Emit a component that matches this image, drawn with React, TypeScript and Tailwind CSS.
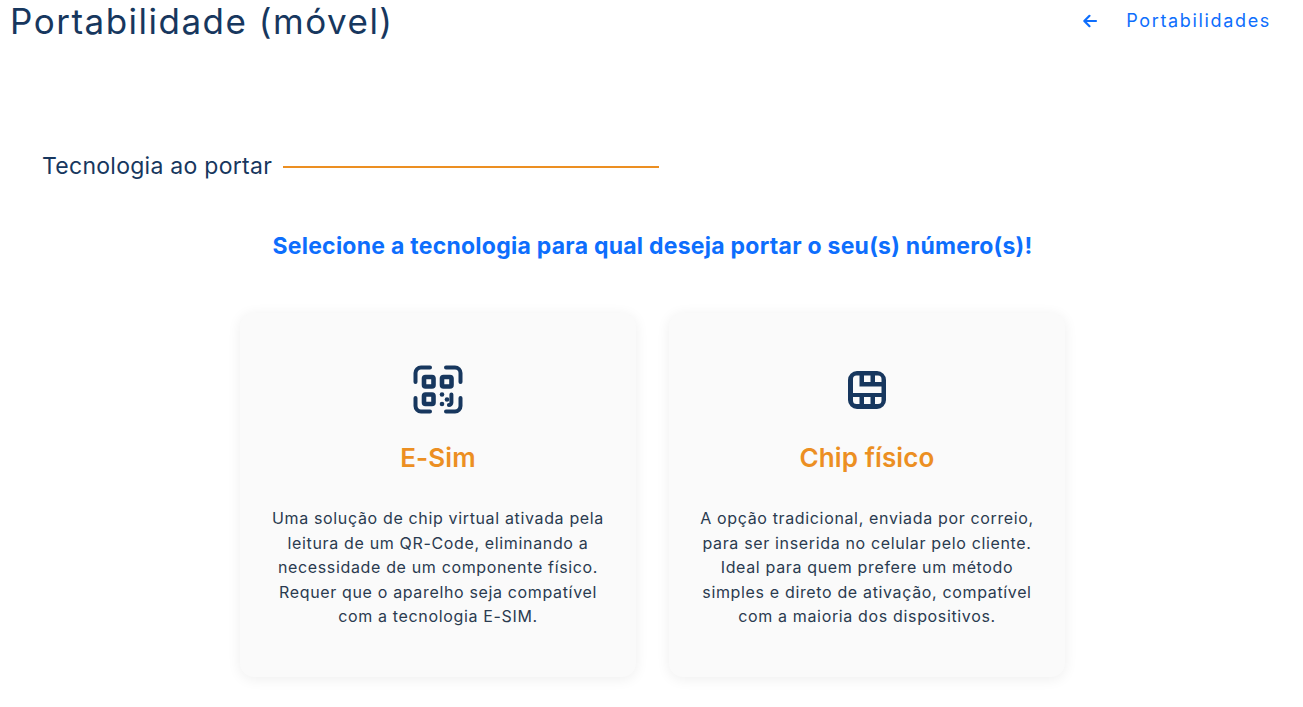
function QrIcon() {
  return (
    <svg width="50" height="50" viewBox="0 0 50 50" fill="none" stroke="#17375e" strokeLinecap="round" strokeLinejoin="round">
      <g strokeWidth="4">
        <path d="M2.500 17V8a5.500 5.500 0 0 1 5.500-5.500h9" />
        <path d="M33 2.500h9a5.500 5.500 0 0 1 5.500 5.500v9" />
        <path d="M2.500 33v8a5.500 5.500 0 0 0 5.500 5.500h9" />
        <path d="M47.500 33v8a5.500 5.500 0 0 1-5.500 5.500h-9" />
      </g>
      <g strokeWidth="4.600">
        <rect x="11" y="12" width="9.500" height="9.500" rx="1.500" />
        <rect x="29" y="12" width="9.500" height="9.500" rx="1.500" />
        <rect x="11" y="29.500" width="9.500" height="9.500" rx="1.500" />
      </g>
      <path d="M38.400 29.500v8a2.500 2.500 0 0 1-2.500 2.500" strokeWidth="4" />
      <g fill="#17375e" stroke="none">
        <circle cx="29" cy="29.500" r="2.300" />
        <circle cx="29" cy="39" r="2.300" />
        <circle cx="34" cy="34.500" r="2.300" />
      </g>
    </svg>
  );
}

function ChipIcon() {
  return (
    <svg width="38" height="38" viewBox="0 0 38 38">
      <path
        fillRule="evenodd"
        fill="#17375e"
        d="M9 0h20a9 9 0 0 1 9 9v20a9 9 0 0 1-9 9H9a9 9 0 0 1-9-9V9a9 9 0 0 1 9-9z
           M16 4.500v6.500h6.500V4.500z
           M27 4.500v6.500h6.500V8a3.500 3.500 0 0 0-3.500-3.500z
           M8.500 4.500A3.500 3.500 0 0 0 5 8v14h28.500v-6.500H11.500V4.500z
           M5 26v3.500A3.500 3.500 0 0 0 8.500 33h3v-7z
           M16 26v7h6.500v-7z
           M27 26v7h3a3.500 3.500 0 0 0 3.500-3.500V26z"
      />
    </svg>
  );
}

function TechCard({ icon, title, lines }: { icon: React.ReactNode; title: string; lines: string[] }) {
  return (
    <div className="flex h-[364px] w-[396px] flex-col items-center rounded-[14px] bg-[#fafafa] shadow-[0_2px_14px_rgba(0,0,0,0.07)]">
      <div className="flex h-[102px] w-full items-end justify-center">{icon}</div>
      <h3 className="mt-[26.500px] text-[26px] leading-[32px] font-semibold tracking-[0.1px] text-[#ec8f22]">{title}</h3>
      <p className="mt-[32.500px] text-center text-[16px] leading-[24.600px] tracking-[0.65px] whitespace-nowrap text-[#2a3b50]">
        {lines.map((l) => (
          <span key={l} className="block">
            {l}
          </span>
        ))}
      </p>
    </div>
  );
}

export default function App() {
  return (
    <div className="h-[707px] w-[1303px] overflow-hidden bg-white font-['Inter','Liberation_Sans',sans-serif]">
      <div className="flex h-[42px] items-center justify-between pr-[32px] pl-[10px]">
        <h1 className="text-[35px] leading-[42px] tracking-[1.500px] text-[#17375e]">Portabilidade (móvel)</h1>
        <a className="flex items-center text-[#0d6efd]">
          <svg width="16" height="16" viewBox="0 0 16 16" fill="none" stroke="currentColor" strokeWidth="2.200" strokeLinecap="round" strokeLinejoin="round">
            <path d="M14 8H2.500M7.500 2.800 2.300 8l5.200 5.200" />
          </svg>
          <span className="ml-[28px] text-[18px] leading-[24px] tracking-[1.660px]">Portabilidades</span>
        </a>
      </div>

      <div className="mt-[110px] flex items-center pl-[42px]">
        <h2 className="text-[23px] leading-[28px] tracking-[0.27px] text-[#17375e]">Tecnologia ao portar</h2>
        <div className="mt-[2px] ml-[11px] h-[2px] w-[376px] bg-[#ec8f22]" />
      </div>

      <p className="mt-[50px] pl-[2px] text-center text-[23px] leading-[32px] font-bold tracking-[0.25px] text-[#0d6efd]">
        Selecione a tecnologia para qual deseja portar o seu(s) número(s)!
      </p>

      <div className="mt-[51px] flex justify-center gap-[33px] pl-[2px]">
        <TechCard
          icon={<QrIcon />}
          title="E-Sim"
          lines={[
            "Uma solução de chip virtual ativada pela",
            "leitura de um QR-Code, eliminando a",
            "necessidade de um componente físico.",
            "Requer que o aparelho seja compatível",
            "com a tecnologia E-SIM.",
          ]}
        />
        <TechCard
          icon={
            <div className="mb-[6.500px]">
              <ChipIcon />
            </div>
          }
          title="Chip físico"
          lines={[
            "A opção tradicional, enviada por correio,",
            "para ser inserida no celular pelo cliente.",
            "Ideal para quem prefere um método",
            "simples e direto de ativação, compatível",
            "com a maioria dos dispositivos.",
          ]}
        />
      </div>
    </div>
  );
}
